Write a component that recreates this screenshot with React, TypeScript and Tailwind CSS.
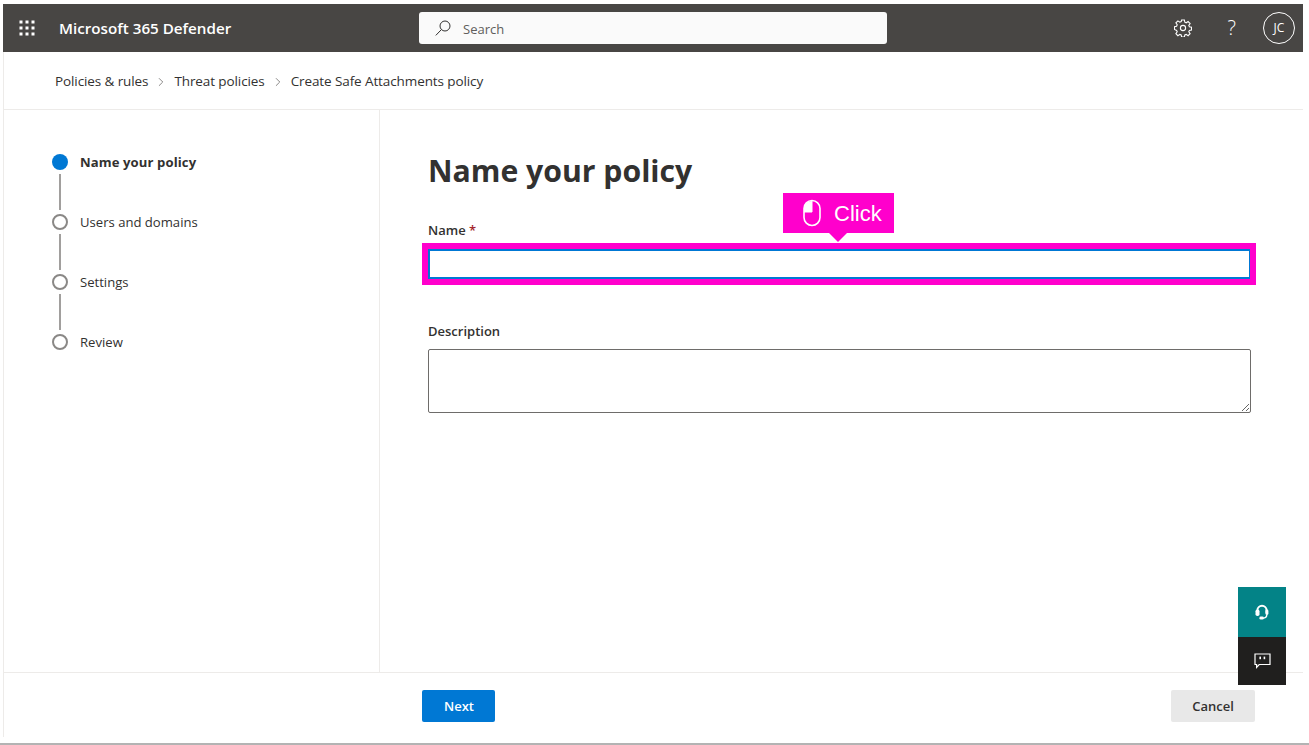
import { ChevronRight } from 'lucide-react';

const steps = ['Name your policy', 'Users and domains', 'Settings', 'Review'];

function WaffleIcon() {
  return (
    <svg width="16" height="16" viewBox="0 0 16 16" fill="#fff">
      {[2, 8, 14].map((y) =>
        [2, 8, 14].map((x) => <rect key={`${x}-${y}`} x={x - 1.5} y={y - 1.5} width="3" height="3" />)
      )}
    </svg>
  );
}

function SearchIcon() {
  return (
    <svg width="16" height="16" viewBox="0 0 16 16" fill="none" stroke="#323130" strokeWidth="1">
      <circle cx="10" cy="6" r="5" />
      <path d="M6.4 9.6 0.8 15.4" />
    </svg>
  );
}

function GearIcon() {
  return (
    <svg width="18" height="18" viewBox="0 0 18 18" fill="none" stroke="#fff" strokeWidth="1.1">
      <circle cx="9" cy="9" r="2.6" />
      <path d="M7.6 1h2.8l.4 2.2 1.4.6 1.9-1.3 2 2-1.3 1.9.6 1.4 2.1.4v2.8l-2.1.4-.6 1.4 1.3 1.9-2 2-1.9-1.3-1.4.6-.4 2.1H7.6l-.4-2.1-1.4-.6-1.9 1.3-2-2 1.3-1.9-.6-1.4L.5 10.4V7.6l2.1-.4.6-1.4-1.3-1.9 2-2 1.9 1.3 1.4-.6z" />
    </svg>
  );
}

function MouseIcon() {
  return (
    <svg width="20" height="28" viewBox="0 0 20 28" fill="none">
      <path d="M10 2v11H2V9a8 7 0 0 1 8-7z" fill="#fff" />
      <rect x="2" y="1.5" width="16" height="25" rx="8" stroke="#fff" strokeWidth="1.6" />
      <path d="M2 13h8V2" stroke="#fff" strokeWidth="1" />
    </svg>
  );
}

function HeadsetIcon() {
  return (
    <svg width="14" height="16" viewBox="0 0 14 16" fill="none">
      <path d="M2.4 9V6.4a4.6 4.6 0 0 1 9.2 0V9" stroke="#fff" strokeWidth="2" />
      <rect x="0.5" y="5.5" width="4" height="6.5" rx="1.8" fill="#fff" />
      <rect x="10.4" y="5.5" width="3" height="5.5" rx="1.4" fill="#fff" />
      <path d="M11.8 10.5c0 2.6-1.6 3.6-4 3.6" stroke="#fff" strokeWidth="1.4" />
      <rect x="4.4" y="12.6" width="4.4" height="3" rx="1.4" fill="#fff" />
    </svg>
  );
}

function ChatIcon() {
  return (
    <svg width="17" height="16" viewBox="0 0 17 16" fill="none">
      <path d="M1 1h15v10.5H5.2L2.6 14.4v-2.9H1z" stroke="#fff" strokeWidth="1.2" />
      <rect x="5.4" y="3.6" width="1.6" height="2.6" fill="#fff" />
      <rect x="9.6" y="3.6" width="1.6" height="2.6" fill="#fff" />
    </svg>
  );
}

export default function App() {
  return (
    <div className="relative h-[745px] w-[1309px] overflow-hidden bg-white pl-[3px] pr-[6px] pt-1 font-['Open_Sans',sans-serif] text-[#323130]">
      {/* top bar */}
      <header className="flex h-12 items-center bg-[#484644] text-white">
        <div className="ml-4 flex w-4 justify-center">
          <WaffleIcon />
        </div>
        <div className="ml-6 w-[360px] pt-px text-[15.2px] font-semibold">Microsoft 365 Defender</div>
        <div className="flex h-8 w-[468px] items-center rounded-[3px] bg-[#fafafa] pl-4 text-[#605e5c]">
          <SearchIcon />
          <span className="ml-3 pt-[3px] text-[13px]">Search</span>
        </div>
        <div className="ml-auto flex items-center">
          <GearIcon />
          <span className="ml-[36px] text-[20px] font-light leading-none">?</span>
          <div className="ml-[27px] mr-2 flex h-8 w-8 items-center justify-center rounded-full border border-white text-[12px]">
            JC
          </div>
        </div>
      </header>

      <div className="flex h-[685px] flex-col border-l border-[#edebe9]">
        {/* breadcrumb */}
        <nav className="flex h-[58px] shrink-0 items-center border-b border-[#edebe9] pl-[51px] pt-[2px] text-[13.5px] tracking-[-0.1px]">
          <span>Policies &amp; rules</span>
          <ChevronRight className="mx-[6px] h-[14px] w-[14px] text-[#605e5c]" strokeWidth={1.25} />
          <span>Threat policies</span>
          <ChevronRight className="mx-[6px] h-[14px] w-[14px] text-[#605e5c]" strokeWidth={1.25} />
          <span>Create Safe Attachments policy</span>
        </nav>

        <div className="flex min-h-0 flex-1">
          {/* wizard steps */}
          <aside className="w-[376px] shrink-0 border-r border-[#edebe9] pl-[48px] pt-[44px]">
            {steps.map((step, i) => (
              <div key={step} className="relative flex h-[60px] items-start">
                {i === 0 ? (
                  <div className="h-4 w-4 shrink-0 rounded-full bg-[#0078d4]" />
                ) : (
                  <div className="h-4 w-4 shrink-0 rounded-full border-2 border-[#8a8886]" />
                )}
                {i < steps.length - 1 && <div className="absolute left-[7px] top-[20px] h-[36px] w-[2px] bg-[#a19f9d]" />}
                <span className={`ml-3 text-[13.1px] leading-4 ${i === 0 ? 'font-bold tracking-[0.1px]' : ''}`}>{step}</span>
              </div>
            ))}
          </aside>

          {/* form */}
          <main className="flex-1 pl-[48px] pr-[52px] pt-[41px]">
            <h1 className="text-[30.2px] font-bold leading-10">Name your policy</h1>
            <label className="mt-[29px] block text-[13px] font-semibold leading-5">
              Name <span className="text-[#a4262c]">*</span>
            </label>
            <div className="mt-[9px] h-[30px] border-2 border-[#0078d4]" />
            <label className="mt-[42px] block text-[13px] font-semibold leading-5">Description</label>
            <textarea className="mt-2 block h-[64px] w-full rounded-[2px] border border-[#6e6c6a] bg-white" />
          </main>
        </div>

        {/* footer */}
        <footer className="flex h-[65px] shrink-0 items-start border-t border-[#edebe9] pt-[17px]">
          <button className="ml-[418px] h-8 w-[73px] rounded-[2px] bg-[#0078d4] pl-px pt-[2px] text-[13px] font-semibold text-white">Next</button>
          <button className="ml-auto mr-[48px] h-8 w-[84px] rounded-[2px] bg-[#e8e8e8] pt-[2px] text-[13px] font-semibold">Cancel</button>
        </footer>
      </div>

      {/* bottom edge */}
      <div className="absolute bottom-0 left-0 right-0 h-[2px] bg-[#b3b3b3]" />

      {/* click highlight */}
      <div className="absolute left-[422px] top-[243px] h-[42px] w-[834px] border-[6px] border-[#ff00cc]" />
      <div className="absolute left-[783px] top-[193px] flex h-10 w-[111px] items-center bg-[#ff00cc] pl-[19px] font-['Liberation_Sans',sans-serif] text-[22px] text-white">
        <MouseIcon />
        <span className="ml-3 pt-px">Click</span>
        <div className="absolute left-[46px] top-10 h-0 w-0 border-x-[9px] border-t-[9px] border-x-transparent border-t-[#ff00cc]" />
      </div>

      {/* floating help buttons */}
      <div className="absolute left-[1238px] top-[587px] flex w-12 flex-col">
        <button className="flex h-[50px] items-center justify-center bg-[#038387]">
          <HeadsetIcon />
        </button>
        <button className="flex h-12 items-center justify-center bg-[#201f1e]">
          <ChatIcon />
        </button>
      </div>
    </div>
  );
}
